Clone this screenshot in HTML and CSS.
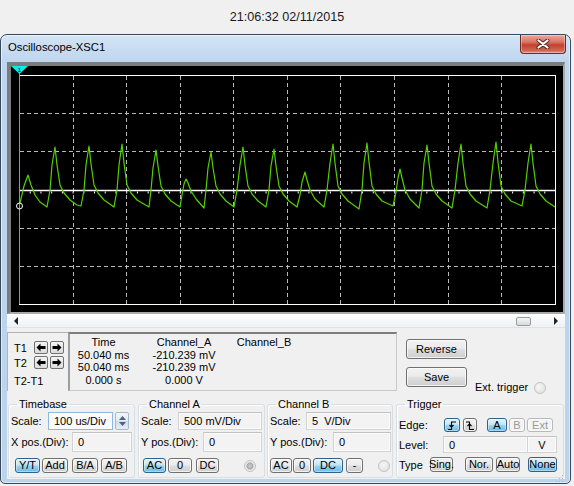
FILE: index.html
```html
<!DOCTYPE html>
<html lang="en">
<head>
    <meta charset="UTF-8">
    <meta name="viewport" content="width=device-width, initial-scale=1.0">
    <title>Oscilloscope-XSC1</title>
    <link rel="stylesheet" href="styles.css">
</head>
<body>
    <div class="clock">21:06:32 02/11/2015</div>

    <div class="window">
        <div class="titlebar">
            <span class="title">Oscilloscope-XSC1</span>
            <button class="close">
                <svg width="14" height="10" viewBox="0 0 14 10">
                    <path d="M2.5 1.5L11.5 8.5M11.5 1.5L2.5 8.5" stroke="#4a2a26" stroke-width="4" stroke-linecap="round"/>
                    <path d="M2.5 1.5L11.5 8.5M11.5 1.5L2.5 8.5" stroke="#fff" stroke-width="2.2" stroke-linecap="round"/>
                </svg>
            </button>
        </div>

        <div class="client">
            <!-- scope display -->
            <div class="screen">
                <svg width="552" height="246" viewBox="11 66 552 246">
                    <rect x="11" y="66" width="552" height="246" fill="#000"/>
                    <g stroke="#b9b9b9" stroke-width="1" stroke-dasharray="4 3" fill="none">
                        <path d="M73.5 76V304M126.5 76V304M180.5 76V304M233.5 76V304M287.5 76V304M340.5 76V304M394.5 76V304M448.5 76V304M501.5 76V304"/>
                        <path d="M20 113.5H555M20 151.5H555M20 228.5H555M20 266.5H555"/>
                    </g>
                    <rect x="19.5" y="75.5" width="536" height="229" fill="none" stroke="#fff"/>
                    <path d="M20 190.5H555" stroke="#fff" stroke-width="1.6"/>
                    <path d="M19 192.5H555" stroke="#fff" stroke-width="2" stroke-dasharray="1 9.72"/>
                    <polyline fill="none" stroke="#55d000" stroke-width="1.2" stroke-linejoin="round" points="
                        20,203 24,186 28,175 31,185 35,195 40,202 47,207
                        50,190 52,165 55,147 57,165 60,185 64,193 70,200 77,205 81,206
                        84,190 86,165 89,146 91,164 94,185 98,193 104,200 114,207
                        117,190 119,165 122,144 124,163 127,185 131,193 137,200 149,207
                        151,190 153,168 156,150 158,166 161,186 165,194 171,201 180,207
                        182,195 184,184 186,179 188,183 191,191 196,199 204,208
                        206,190 208,168 211,152 213,168 216,186 220,194 226,201 234,207
                        237,190 240,165 243,147 245,165 248,186 252,194 258,201 266,207
                        269,190 271,166 274,149 276,166 279,186 283,194 289,201 297,207
                        300,195 302,182 305,172 307,180 310,190 315,199 324,207
                        327,190 330,163 333,144 335,163 338,186 342,194 348,201 359,209
                        362,190 364,163 367,143 369,162 372,186 376,194 382,201 393,206
                        396,192 398,178 400,169 402,178 405,190 410,199 419,208
                        422,190 424,163 427,145 429,163 432,186 436,194 442,201 452,208
                        455,190 458,163 461,144 463,163 466,186 470,194 476,201 487,208
                        490,190 493,163 496,142 498,162 501,186 505,194 511,201 522,206
                        525,190 528,163 531,144 533,163 536,186 540,194 546,201 555,207"/>
                    <path d="M19.5 66V304" stroke="#55d000"/>
                    <circle cx="19.5" cy="206" r="3" fill="none" stroke="#fff"/>
                    <polygon points="11,66 28,66 19.5,74" fill="#10e8f0"/>
                    <text x="19.5" y="71.5" font-size="6" font-family="Liberation Sans, sans-serif" text-anchor="middle" fill="#000">1</text>
                </svg>
            </div>

            <div class="scrollbar">
                <span class="arrow-left"></span>
                <span class="thumb"></span>
                <span class="arrow-right"></span>
            </div>

            <div class="controls">
                <div class="top-row">
                    <div class="cursors">
                        <div class="cur-row">
                            <span class="cur-label">T1</span>
                            <button class="nudge"><svg width="10" height="9" viewBox="0 0 10 9"><path d="M0.5 4.5L4.5 0.5V3H9.5V6H4.5V8.5Z" fill="#000"/></svg></button>
                            <button class="nudge"><svg width="10" height="9" viewBox="0 0 10 9"><path d="M9.5 4.5L5.5 0.5V3H0.5V6H5.5V8.5Z" fill="#000"/></svg></button>
                        </div>
                        <div class="cur-row">
                            <span class="cur-label">T2</span>
                            <button class="nudge"><svg width="10" height="9" viewBox="0 0 10 9"><path d="M0.5 4.5L4.5 0.5V3H9.5V6H4.5V8.5Z" fill="#000"/></svg></button>
                            <button class="nudge"><svg width="10" height="9" viewBox="0 0 10 9"><path d="M9.5 4.5L5.5 0.5V3H0.5V6H5.5V8.5Z" fill="#000"/></svg></button>
                        </div>
                        <div class="cur-diff">T2-T1</div>
                    </div>

                    <div class="readout">
                        <span>Time</span><span>Channel_A</span><span>Channel_B</span>
                        <span>50.040 ms</span><span>-210.239 mV</span><span></span>
                        <span>50.040 ms</span><span>-210.239 mV</span><span></span>
                        <span>0.000 s</span><span>0.000 V</span><span></span>
                    </div>

                    <div class="actions">
                        <button class="btn wide">Reverse</button>
                        <span></span>
                        <button class="btn wide">Save</button>
                        <span class="ext">Ext. trigger <span class="radio"></span></span>
                    </div>
                </div>

                <div class="groups">
                    <fieldset class="group timebase">
                        <legend>Timebase</legend>
                        <div class="row r-scale">
                            <span class="lbl" style="width:37px">Scale:</span>
                            <span class="field focus" style="width:65px">100 us/Div</span>
                            <span class="spin">
                                <svg width="7" height="4" viewBox="0 0 7 4"><path d="M0 4L3.5 0L7 4Z" fill="#4d6185"/></svg>
                                <svg width="7" height="4" viewBox="0 0 7 4"><path d="M0 0L3.5 4L7 0Z" fill="#4d6185"/></svg>
                            </span>
                        </div>
                        <div class="row r-pos">
                            <span class="lbl" style="width:61px">X pos.(Div):</span>
                            <span class="field" style="width:60px">0</span>
                        </div>
                        <div class="row r-btns">
                            <button class="btn on" style="margin-left:4px;width:25px">Y/T</button>
                            <button class="btn" style="margin-left:2px;width:26px">Add</button>
                            <button class="btn" style="margin-left:4px;width:26px">B/A</button>
                            <button class="btn" style="margin-left:3px;width:26px">A/B</button>
                        </div>
                    </fieldset>

                    <fieldset class="group chan-a">
                        <legend>Channel A</legend>
                        <div class="row r-scale">
                            <span class="lbl" style="width:37px">Scale:</span>
                            <span class="field" style="width:84px">500 mV/Div</span>
                        </div>
                        <div class="row r-pos">
                            <span class="lbl" style="width:62px">Y pos.(Div):</span>
                            <span class="field" style="width:59px">0</span>
                        </div>
                        <div class="row r-btns">
                            <button class="btn on" style="margin-left:2px;width:23px">AC</button>
                            <button class="btn" style="margin-left:2px;width:24px">0</button>
                            <button class="btn" style="margin-left:4px;width:23px">DC</button>
                            <span class="radio dot" style="margin-left:25px"></span>
                        </div>
                    </fieldset>

                    <fieldset class="group chan-b">
                        <legend>Channel B</legend>
                        <div class="row r-scale">
                            <span class="lbl" style="width:36px">Scale:</span>
                            <span class="field" style="width:85px">5&nbsp; V/Div</span>
                        </div>
                        <div class="row r-pos">
                            <span class="lbl" style="width:63px">Y pos.(Div):</span>
                            <span class="field" style="width:58px">0</span>
                        </div>
                        <div class="row r-btns">
                            <button class="btn" style="width:22px">AC</button>
                            <button class="btn" style="margin-left:1px;width:18px">0</button>
                            <button class="btn on" style="margin-left:2px;width:30px">DC</button>
                            <button class="btn" style="margin-left:3px;width:17px">-</button>
                            <span class="radio" style="margin-left:15px"></span>
                        </div>
                    </fieldset>

                    <fieldset class="group trigger">
                        <legend>Trigger</legend>
                        <div class="row r-edge">
                            <span class="lbl" style="width:45px">Edge:</span>
                            <button class="btn on" style="width:16px"><svg width="10" height="9" viewBox="0 0 10 9"><path d="M1 8.5H4.5V1H9M4.5 6L2.5 4M4.5 6L6.5 4" fill="none" stroke="#000" stroke-width="1.1"/></svg></button>
                            <button class="btn" style="margin-left:3px;width:14px"><svg width="10" height="9" viewBox="0 0 10 9"><path d="M1 1H4.5V8.5H9M4.5 3L2.5 5M4.5 3L6.5 5" fill="none" stroke="#000" stroke-width="1.1"/></svg></button>
                            <button class="btn on" style="margin-left:10px;width:20px">A</button>
                            <button class="btn off" style="margin-left:2px;width:16px">B</button>
                            <button class="btn off" style="margin-left:2px;width:26px">Ext</button>
                        </div>
                        <div class="row r-level">
                            <span class="lbl" style="width:44px">Level:</span>
                            <span class="field" style="width:85px">0</span>
                            <span class="field unit" style="width:29px">V</span>
                        </div>
                        <div class="row r-type">
                            <span class="lbl" style="width:31px">Type</span>
                            <button class="btn" style="width:23px">Sing.</button>
                            <button class="btn" style="margin-left:12px;width:28px">Nor.</button>
                            <button class="btn" style="margin-left:3px;width:24px">Auto</button>
                            <button class="btn on" style="margin-left:8px;width:29px">None</button>
                        </div>
                    </fieldset>
                </div>
                <span class="grip"></span>
            </div>
        </div>
    </div>
</body>
</html>
```

FILE: styles.css
```css
*{
    margin: 0;
    padding: 0;
    box-sizing: border-box;
}
body{
    background: #f0f0f0;
    font-family: "Liberation Sans", Arial, sans-serif;
    font-size: 11px;
    color: #000;
}
.clock{
    height: 34px;
    line-height: 34px;
    text-align: center;
    font-size: 12.6px;
    color: #1a1a1a;
}

/* window frame */
.window{
    width: 571px;
    height: 450px;
    border: 1px solid #39495c;
    border-radius: 7px 7px 5px 5px;
    background: linear-gradient(180deg, #d4e4f5 0px, #bdd5ee 28px, #bcd3ec 100%);
    box-shadow: inset 0 0 0 1px rgba(255,255,255,0.55);
    padding: 0 5px 4px 6px;
}
.titlebar{
    height: 27px;
    display: flex;
    justify-content: space-between;
    align-items: flex-start;
}
.title{
    margin-top: 6px;
    margin-left: 1px;
    font-size: 11.3px;
    line-height: 13px;
    color: #000;
}
.close{
    width: 46px;
    height: 19px;
    margin-right: -1px;
    border: 1px solid #6b2c24;
    border-top: none;
    border-radius: 0 0 4px 4px;
    background: linear-gradient(180deg, #e9a99b 0%, #d87562 40%, #c4402f 55%, #d0634f 85%, #e2907e 100%);
    box-shadow: inset 0 0 0 1px rgba(255,255,255,0.35);
    display: flex;
    align-items: center;
    justify-content: center;
}
.client{
    width: 558px;
    height: 417px;
    background: #f0f0f0;
}

/* scope display */
.screen{
    height: 252px;
    border-style: solid;
    border-width: 4px 2px 2px 4px;
    border-color: #7c7c7c #a9a9a9 #a9a9a9 #7c7c7c;
    box-shadow: inset 0 0 0 1px #595959;
    background: #000;
}
.screen svg{
    display: block;
}
.scrollbar{
    height: 14px;
    display: flex;
    align-items: center;
    background: linear-gradient(180deg, #fbfcfd, #eef1f5);
    border-top: 1px solid #ffffff;
    border-bottom: 1px solid #dde3ea;
}
.arrow-left{
    margin-left: 7px;
    border-right: 4px solid #222;
    border-top: 4px solid transparent;
    border-bottom: 4px solid transparent;
}
.thumb{
    margin-left: auto;
    width: 15px;
    height: 9px;
    border: 1px solid #9b9b9b;
    border-radius: 2px;
    background: linear-gradient(180deg, #f6f6f6, #d9d9d9);
}
.arrow-right{
    margin-left: 23px;
    margin-right: 7px;
    border-left: 4px solid #222;
    border-top: 4px solid transparent;
    border-bottom: 4px solid transparent;
}

/* controls */
.controls{
    position: relative;
    height: 151px;
}
.top-row{
    margin-top: 4px;
    height: 59px;
    display: flex;
}
.cursors{
    width: 61px;
    border-top: 1px solid #b4b4b4;
    border-left: 1px solid #b4b4b4;
    padding: 7px 0 0 6px;
}
.cur-row{
    height: 15px;
    display: flex;
    align-items: center;
}
.cur-label{
    width: 20px;
}
.nudge{
    width: 14px;
    height: 13px;
    margin-right: 2px;
    border: 1px solid #707070;
    border-radius: 2px;
    background: linear-gradient(180deg, #f3f3f3, #dcdcdc);
    display: flex;
    align-items: center;
    justify-content: center;
}
.cur-diff{
    margin-top: 5px;
    line-height: 13px;
}
.readout{
    width: 329px;
    border-style: solid;
    border-width: 2px 1px 1px 2px;
    border-color: #7d7d7d #c9c9c9 #c9c9c9 #9d9d9d;
    display: grid;
    grid-template-columns: 67px 94px 66px;
    grid-auto-rows: 12.7px;
    padding-top: 2px;
    line-height: 13px;
    text-align: center;
}
.actions{
    flex: 1;
    padding: 7px 0 0 9px;
    display: grid;
    grid-template-columns: 61px auto;
    grid-template-rows: 20px 20px;
    row-gap: 8px;
}
.ext{
    align-self: end;
    margin: 0 0 -7px 8px;
    display: flex;
    align-items: center;
    gap: 6px;
    line-height: 13px;
}

/* buttons */
.btn{
    font-family: "Liberation Sans", Arial, sans-serif;
    font-size: 11px;
    color: #000;
    height: 15px;
    line-height: 13px;
    padding: 0;
    border: 1px solid #707070;
    border-radius: 3px;
    background: linear-gradient(180deg, #f2f2f2 0%, #ebebeb 45%, #dddddd 55%, #cfcfcf 100%);
    box-shadow: inset 0 0 0 1px rgba(255,255,255,0.7);
    display: flex;
    align-items: center;
    justify-content: center;
    white-space: nowrap;
    overflow: visible;
}
.btn.wide{
    width: 61px;
    height: 20px;
}
.btn.on{
    border-color: #2c628b;
    background: linear-gradient(180deg, #e5f4fc 0%, #c4e5f6 45%, #98d1ef 55%, #6fbbe3 100%);
    box-shadow: inset 0 0 0 1px rgba(255,255,255,0.4);
}
.btn.off{
    color: #9a9a9a;
    border-color: #b5b9bc;
    background: #f4f4f4;
}
.radio{
    width: 12px;
    height: 12px;
    border-radius: 50%;
    border: 1px solid #c3c3c3;
    background: radial-gradient(circle at 40% 40%, #f6f6f6, #dcdcdc);
    display: inline-block;
}
.radio.dot{
    background: radial-gradient(circle, #d2d2d2 0, #a7a7a7 3px, #ececec 4px, #dedede 100%);
}

/* group boxes */
.groups{
    margin-top: 7px;
    display: flex;
}
.group{
    height: 80px;
    min-width: 0;
    border: 1px solid #d5dfe5;
    border-radius: 3px;
    box-shadow: inset 1px 1px 0 #fff;
    padding: 0 0 0 2px;
}
.group legend{
    margin-left: 6px;
    padding: 0 2px;
    line-height: 13px;
}
.timebase{ margin-left: 1px; width: 127px; }
.chan-a{ margin-left: 3px; width: 127px; }
.chan-b{ margin-left: 2px; width: 126px; }
.trigger{ margin-left: 3px; width: 168px; }

.row{
    display: flex;
    align-items: center;
}
.r-scale{ margin-top: 1px; height: 18px; }
.r-pos{ margin-top: 2px; height: 20px; }
.r-btns{ margin-top: 6px; height: 15px; }
.r-edge{ margin-top: 7px; height: 14px; }
.r-edge .btn{ height: 14px; }
.r-level{ margin-top: 4px; height: 17px; }
.r-type{ margin-top: 4px; height: 15px; }

.lbl{
    flex: none;
    white-space: nowrap;
}
.field{
    height: 100%;
    padding-left: 5px;
    border: 1px solid #d2d2d2;
    border-top-color: #c2c2c2;
    background: #f3f3f3;
    box-shadow: inset 0 0 0 1px #fbfbfb;
    display: flex;
    align-items: center;
    white-space: nowrap;
}
.field.focus{
    border-color: #8fb8e0;
    background: #f9fbfd;
}
.field.unit{
    border-left: none;
    justify-content: center;
    padding-left: 0;
}
.spin{
    margin-left: 2px;
    width: 14px;
    height: 18px;
    border: 1px solid #a9b9ca;
    border-radius: 2px;
    background: linear-gradient(180deg, #f2f6fa 0%, #e2eaf3 48%, #cfdbe8 52%, #e6edf5 100%);
    display: flex;
    flex-direction: column;
    align-items: center;
    justify-content: space-around;
    padding: 2px 0;
}
.spin svg{
    display: block;
}
.grip{
    position: absolute;
    right: 2px;
    bottom: 1px;
    width: 8px;
    height: 8px;
    background: radial-gradient(circle, #b6b6b6 0.8px, transparent 1px) 0 0 / 3px 3px;
    clip-path: polygon(100% 0, 100% 100%, 0 100%);
}
```
